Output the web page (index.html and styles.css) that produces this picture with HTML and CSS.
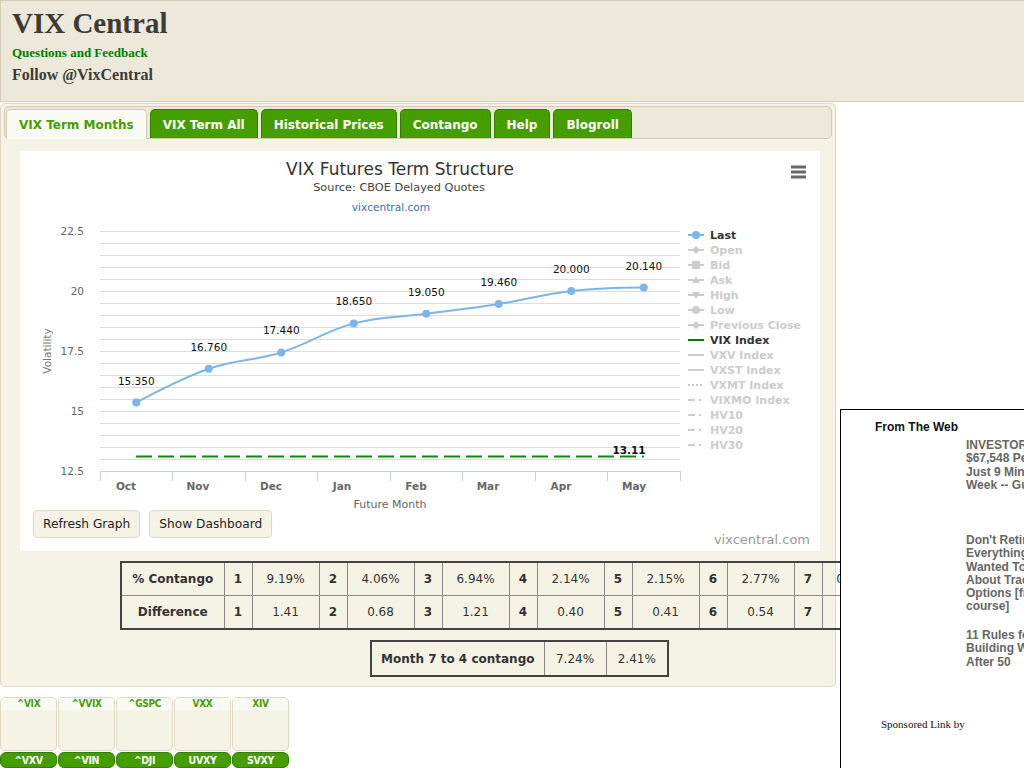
FILE: index.html
```html
<!DOCTYPE html>
<html>
<head>
<meta charset="utf-8">
<title>VIX Central</title>
<link rel="stylesheet" href="styles.css">
</head>
<body>
<header class="site-head">
  <h1 class="site-title">VIX Central</h1>
  <a class="feedback" href="#">Questions and Feedback</a>
  <div class="follow">Follow @VixCentral</div>
</header>

<div class="tabs">
  <ul class="tab-nav">
    <li class="tab active">VIX Term Months</li>
    <li class="tab">VIX Term All</li>
    <li class="tab">Historical Prices</li>
    <li class="tab">Contango</li>
    <li class="tab">Help</li>
    <li class="tab">Blogroll</li>
  </ul>
  <div class="panel">
    <div class="chart-box">
      <svg class="chart" width="800" height="359" viewBox="0 0 800 359" xmlns="http://www.w3.org/2000/svg">
        <text class="c-title" x="380" y="24" text-anchor="middle">VIX Futures Term Structure</text>
        <text class="c-sub" x="379" y="40" text-anchor="middle">Source: CBOE Delayed Quotes</text>
        <text class="c-link" x="371" y="60" text-anchor="middle">vixcentral.com</text>
        <g class="menu" stroke="#666" stroke-width="3">
          <line x1="771" y1="16" x2="786" y2="16"/>
          <line x1="771" y1="21" x2="786" y2="21"/>
          <line x1="771" y1="26" x2="786" y2="26"/>
        </g>
        <path class="grid" d="M80 80.5H660M80 92.5H660M80 104.5H660M80 116.5H660M80 128.5H660M80 140.5H660M80 152.5H660M80 164.5H660M80 176.5H660M80 188.5H660M80 200.5H660M80 212.5H660M80 224.5H660M80 236.5H660M80 248.5H660M80 260.5H660M80 272.5H660M80 284.5H660M80 296.5H660M80 308.5H660"/>
        <path class="axis" d="M80 320.5H660M80.5 320V330M152.5 320V330M225.5 320V330M297.5 320V330M370.5 320V330M442.5 320V330M515.5 320V330M587.5 320V330M660.5 320V330"/>
        <g class="ylab" text-anchor="end">
          <text x="64" y="84">22.5</text>
          <text x="64" y="144">20</text>
          <text x="64" y="204">17.5</text>
          <text x="64" y="264">15</text>
          <text x="64" y="324">12.5</text>
        </g>
        <text class="ytitle" x="0" y="0" text-anchor="middle" transform="translate(31 200) rotate(-90)">Volatility</text>
        <g class="xlab" text-anchor="middle">
          <text x="106" y="339">Oct</text>
          <text x="178" y="339">Nov</text>
          <text x="251" y="339">Dec</text>
          <text x="322" y="339">Jan</text>
          <text x="396" y="339">Feb</text>
          <text x="468" y="339">Mar</text>
          <text x="541" y="339">Apr</text>
          <text x="614" y="339">May</text>
        </g>
        <text class="xtitle" x="370" y="357" text-anchor="middle">Future Month</text>
        <path class="vix" d="M116 305.5H624"/>
        <text class="dl bold" x="609" y="303" text-anchor="middle">13.11</text>
        <path class="series" d="M116.25 251.6C116.25 251.6 159.75 227.84 188.75 217.8C217.75 207.76 232.25 210.48 261.25 201.4C290.25 192.32 304.75 180.12 333.75 172.4C362.75 164.68 377.25 166.68 406.25 162.8C435.25 158.92 449.75 157.56 478.75 153C507.75 148.44 522.25 143.28 551.25 140C580.25 136.72 623.75 136.6 623.75 136.6"/>
        <g fill="#7cb5ec">
          <circle cx="116.25" cy="251.6" r="4"/>
          <circle cx="188.75" cy="217.8" r="4"/>
          <circle cx="261.25" cy="201.4" r="4"/>
          <circle cx="333.75" cy="172.4" r="4"/>
          <circle cx="406.25" cy="162.8" r="4"/>
          <circle cx="478.75" cy="153" r="4"/>
          <circle cx="551.25" cy="140" r="4"/>
          <circle cx="623.75" cy="136.6" r="4"/>
        </g>
        <g class="dl" text-anchor="middle">
          <text x="116.25" y="233.5">15.350</text>
          <text x="188.75" y="199.8">16.760</text>
          <text x="261.25" y="183.4">17.440</text>
          <text x="333.75" y="154.4">18.650</text>
          <text x="406.25" y="144.8">19.050</text>
          <text x="478.75" y="135">19.460</text>
          <text x="551.25" y="122">20.000</text>
          <text x="623.75" y="118.6">20.140</text>
        </g>
        <g class="legend">
          <path d="M668 84H684" stroke="#7cb5ec" stroke-width="2"/>
          <circle cx="676" cy="84" r="4" fill="#7cb5ec"/>
          <text class="on" x="690" y="88">Last</text>

          <path d="M668 99H684" class="off-line"/>
          <path d="M676 95L680 99L676 103L672 99Z" fill="#ccc"/>
          <text class="off" x="690" y="103">Open</text>

          <path d="M668 114H684" class="off-line"/>
          <rect x="672" y="110" width="8" height="8" fill="#ccc"/>
          <text class="off" x="690" y="118">Bid</text>

          <path d="M668 129H684" class="off-line"/>
          <path d="M676 125L680 132L672 132Z" fill="#ccc"/>
          <text class="off" x="690" y="133">Ask</text>

          <path d="M668 144H684" class="off-line"/>
          <path d="M672 141L680 141L676 148Z" fill="#ccc"/>
          <text class="off" x="690" y="148">High</text>

          <path d="M668 159H684" class="off-line"/>
          <circle cx="676" cy="159" r="4" fill="#ccc"/>
          <text class="off" x="690" y="163">Low</text>

          <path d="M668 174H684" class="off-line"/>
          <path d="M676 170L680 174L676 178L672 174Z" fill="#ccc"/>
          <text class="off" x="690" y="178">Previous Close</text>

          <path d="M668 189H684" stroke="#008000" stroke-width="2"/>
          <text class="on" x="690" y="193">VIX Index</text>

          <path d="M668 204H684" class="off-line"/>
          <text class="off" x="690" y="208">VXV Index</text>

          <path d="M668 219H684" class="off-line"/>
          <text class="off" x="690" y="223">VXST Index</text>

          <path d="M668 234H684" class="off-line" stroke-dasharray="2,2"/>
          <text class="off" x="690" y="238">VXMT Index</text>

          <path d="M668 249H684" class="off-line" stroke-dasharray="7,4,2,4"/>
          <text class="off" x="690" y="253">VIXMO Index</text>

          <path d="M668 264H684" class="off-line" stroke-dasharray="7,4,2,4"/>
          <text class="off" x="690" y="268">HV10</text>

          <path d="M668 279H684" class="off-line" stroke-dasharray="7,4,2,4"/>
          <text class="off" x="690" y="283">HV20</text>

          <path d="M668 294H684" class="off-line" stroke-dasharray="7,4,2,4"/>
          <text class="off" x="690" y="298">HV30</text>
        </g>
      </svg>
      <div class="chart-foot">
        <div class="btns">
          <button class="btn">Refresh Graph</button>
          <button class="btn">Show Dashboard</button>
        </div>
        <span class="credit">vixcentral.com</span>
      </div>
    </div>

    <table class="grid-table ctg">
      <colgroup>
        <col class="c-lbl"><col class="c-n"><col class="c-v"><col class="c-n"><col class="c-v"><col class="c-n"><col class="c-v"><col class="c-n"><col class="c-v"><col class="c-n"><col class="c-v"><col class="c-n"><col class="c-v"><col class="c-n"><col class="c-v">
      </colgroup>
      <tr>
        <th>% Contango</th>
        <td class="n">1</td><td>9.19%</td>
        <td class="n">2</td><td>4.06%</td>
        <td class="n">3</td><td>6.94%</td>
        <td class="n">4</td><td>2.14%</td>
        <td class="n">5</td><td>2.15%</td>
        <td class="n">6</td><td>2.77%</td>
        <td class="n">7</td><td>0.70%</td>
      </tr>
      <tr>
        <th>Difference</th>
        <td class="n">1</td><td>1.41</td>
        <td class="n">2</td><td>0.68</td>
        <td class="n">3</td><td>1.21</td>
        <td class="n">4</td><td>0.40</td>
        <td class="n">5</td><td>0.41</td>
        <td class="n">6</td><td>0.54</td>
        <td class="n">7</td><td>0.14</td>
      </tr>
    </table>

    <table class="grid-table m74">
      <colgroup><col class="c-m"><col class="c-mv"><col class="c-mv"></colgroup>
      <tr><th>Month 7 to 4 contango</th><td>7.24%</td><td>2.41%</td></tr>
    </table>
  </div>
</div>

<div class="tickers">
  <div class="tk"><div class="tk-box"><div class="tk-head">^VIX</div></div><div class="tk-btn">^VXV</div></div>
  <div class="tk"><div class="tk-box"><div class="tk-head">^VVIX</div></div><div class="tk-btn">^VIN</div></div>
  <div class="tk"><div class="tk-box"><div class="tk-head">^GSPC</div></div><div class="tk-btn">^DJI</div></div>
  <div class="tk"><div class="tk-box"><div class="tk-head">VXX</div></div><div class="tk-btn">UVXY</div></div>
  <div class="tk"><div class="tk-box"><div class="tk-head">XIV</div></div><div class="tk-btn">SVXY</div></div>
</div>

<aside class="ad">
  <div class="ad-title">From The Web</div>
  <div class="ad-items">
    <div class="ad-item">INVESTOR: Make<br>$67,548 Per Year In<br>Just 9 Minutes a<br>Week -- Guaranteed</div>
    <div class="ad-item">Don't Retire Until<br>Everything You<br>Wanted To Know<br>About Trading<br>Options [free<br>course]</div>
    <div class="ad-item last">11 Rules for<br>Building Wealth<br>After 50</div>
  </div>
  <div class="sponsored">Sponsored Link by</div>
</aside>
</body>
</html>
```

FILE: styles.css
```css
html, body {
  margin: 0;
  padding: 0;
  overflow: hidden;
  background: #fff;
}

body {
  font-family: "DejaVu Sans", "Lucida Grande", sans-serif;
  color: #333;
  width: 1024px;
  height: 768px;
  position: relative;
}

/* ---------- header ---------- */
.site-head {
  box-sizing: border-box;
  height: 102px;
  background: #ece8da;
  border: 1px solid #d4ccb0;
  border-right: none;
  padding: 5px 0 0 11px;
  font-family: "Liberation Serif", "Times New Roman", serif;
  color: #3d3b37;
}

.site-title {
  margin: 0;
  font-size: 29px;
  line-height: 34px;
  font-weight: bold;
}

.feedback {
  display: block;
  margin-top: 4.5px;
  font-size: 13px;
  line-height: 16px;
  font-weight: bold;
  color: #008000;
  text-decoration: none;
}

.follow {
  margin-top: 4.5px;
  font-size: 16px;
  line-height: 20px;
  font-weight: bold;
}

/* ---------- tabs ---------- */
.tabs {
  box-sizing: border-box;
  width: 836px;
  margin-top: 1px;
  padding: 2px 3px 9px;
  background: #f5f3e5;
  border: 1px solid #dfd9c3;
  border-radius: 5px;
}

.tab-nav {
  list-style: none;
  margin: 0;
  box-sizing: border-box;
  height: 33px;
  padding: 2px 0 0 1px;
  display: flex;
  background: #ece8da;
  border: 1px solid #d4ccb0;
  border-radius: 5px;
}

.tab {
  box-sizing: border-box;
  height: 29px;
  padding: 0 12px;
  margin-right: 3px;
  font-size: 12px;
  font-weight: bold;
  line-height: 30px;
  color: #fff;
  background: #459e00;
  border: 1px solid #327e04;
  border-bottom: none;
  border-radius: 5px 5px 0 0;
  white-space: nowrap;
}

.tab.active {
  height: 30px;
  background: #fafaf4;
  color: #459e00;
  border-color: #d4ccb0;
}

.panel {
  padding-top: 12px;
}

/* ---------- chart ---------- */
.chart-box {
  width: 800px;
  height: 400px;
  margin-left: 16px;
  background: #fff;
}

.chart {
  display: block;
  font-family: "DejaVu Sans", "Lucida Grande", sans-serif;
}

.c-title { font-size: 17px; fill: #333; }
.c-sub { font-size: 11.3px; fill: #444; }
.c-link { font-size: 10.6px; fill: #3e6bb0; }

.grid { stroke: #dcdcdc; stroke-width: 1; fill: none; }
.axis { stroke: #c0d0e0; stroke-width: 1; fill: none; }

.ylab text { font-size: 10.5px; fill: #666; }
.ytitle { font-size: 10.5px; fill: #777; }
.xlab text { font-size: 10.5px; font-weight: bold; fill: #666; }
.xtitle { font-size: 11px; fill: #666; }

.series { stroke: #7cb5ec; stroke-width: 2; fill: none; }
.vix { stroke: #0a8a0a; stroke-width: 2; stroke-dasharray: 16 6; fill: none; }

.dl { font-size: 10.5px; fill: #111; }
.dl.bold { font-weight: bold; }

.legend text { font-size: 11px; font-weight: bold; }
.legend .on { fill: #333; }
.legend .off { fill: #ccc; }
.off-line { stroke: #ccc; stroke-width: 2; fill: none; }

.chart-foot {
  height: 41px;
  display: flex;
  justify-content: space-between;
  align-items: flex-start;
  padding: 0 10px 0 13px;
}

.btns {
  display: flex;
  gap: 9px;
}

.btn {
  box-sizing: border-box;
  height: 28px;
  padding: 0 9px;
  font-family: "DejaVu Sans", "Lucida Grande", sans-serif;
  font-size: 12.2px;
  color: #222;
  background: #f5f3e5;
  border: 1px solid #dfd9c3;
  border-radius: 4px;
}

.credit {
  align-self: flex-end;
  margin-bottom: 3px;
  font-size: 13px;
  line-height: 16px;
  color: #999;
}

/* ---------- tables ---------- */
.grid-table {
  border-collapse: collapse;
  table-layout: fixed;
  border: 2px solid #444;
  font-size: 12px;
  color: #333;
}

.grid-table th,
.grid-table td {
  border: 1px solid #888;
  padding: 0;
  text-align: center;
  white-space: nowrap;
  overflow: hidden;
}

.grid-table th { font-weight: bold; }
.grid-table td.n { font-weight: bold; }

.ctg {
  width: 770px;
  margin: 10px 0 0 116px;
}

.ctg td, .ctg th { height: 32px; }

.c-lbl { width: 103px; }
.c-n { width: 28px; }
.c-v { width: 67px; }

.m74 {
  width: 297px;
  margin: 10px 0 0 366px;
}

.m74 td, .m74 th { height: 33px; }

.c-m { width: 173px; }
.c-mv { width: 62px; }

/* ---------- tickers ---------- */
.tickers {
  display: flex;
  gap: 1px;
  margin-top: 10px;
}

.tk { width: 57px; }

.tk-box {
  box-sizing: border-box;
  height: 54px;
  background: #f5f3e5;
  border: 1px solid #dfd9c3;
  border-radius: 5px;
  overflow: hidden;
}

.tk-head {
  height: 12px;
  background: #fafaf4;
  color: #459e00;
  font-size: 10px;
  font-weight: bold;
  line-height: 12px;
  text-align: center;
  font-stretch: condensed;
  letter-spacing: -0.3px;
}

.tk-btn {
  box-sizing: border-box;
  height: 16px;
  margin-top: 1px;
  background: #459e00;
  border: 1px solid #327e04;
  border-radius: 6px;
  color: #fff;
  font-size: 10.5px;
  font-weight: bold;
  line-height: 14px;
  text-align: center;
  font-stretch: condensed;
  letter-spacing: -0.3px;
}

/* ---------- ad ---------- */
.ad {
  position: absolute;
  left: 840px;
  top: 409px;
  width: 260px;
  height: 400px;
  background: #fff;
  border: 1px solid #000;
  font-family: "Liberation Sans", Arial, sans-serif;
}

.ad-title {
  margin-top: 10px;
  padding-left: 34px;
  font-size: 12px;
  line-height: 15px;
  font-weight: bold;
  color: #111;
}

.ad-items {
  margin: 4px 0 0 125px;
}

.ad-item {
  height: 95px;
  font-size: 12px;
  line-height: 13.3px;
  font-weight: bold;
  color: #666;
  white-space: nowrap;
}

.ad-item.last { height: 80px; }

.sponsored {
  margin-top: 9px;
  padding-left: 40px;
  font-family: "Liberation Serif", "Times New Roman", serif;
  font-size: 11px;
  line-height: 13px;
  color: #111;
}
```
